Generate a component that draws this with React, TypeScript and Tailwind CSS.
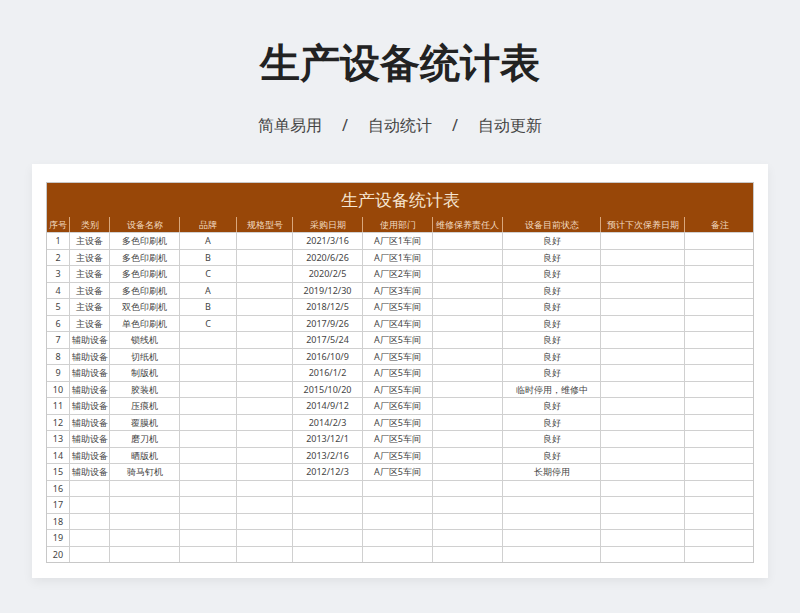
const cols = "grid-cols-[23px_40px_70px_57px_56px_70px_70px_70px_98px_84px_70px]";

const heads = ["序号", "类别", "设备名称", "品牌", "规格型号", "采购日期", "使用部门", "维修保养责任人", "设备目前状态", "预计下次保养日期", "备注"];

const rows: string[][] = [
  ["主设备", "多色印刷机", "A", "2021/3/16", "A厂区1车间", "良好"],
  ["主设备", "多色印刷机", "B", "2020/6/26", "A厂区1车间", "良好"],
  ["主设备", "多色印刷机", "C", "2020/2/5", "A厂区2车间", "良好"],
  ["主设备", "多色印刷机", "A", "2019/12/30", "A厂区3车间", "良好"],
  ["主设备", "双色印刷机", "B", "2018/12/5", "A厂区5车间", "良好"],
  ["主设备", "单色印刷机", "C", "2017/9/26", "A厂区4车间", "良好"],
  ["辅助设备", "锁线机", "", "2017/5/24", "A厂区5车间", "良好"],
  ["辅助设备", "切纸机", "", "2016/10/9", "A厂区5车间", "良好"],
  ["辅助设备", "制版机", "", "2016/1/2", "A厂区5车间", "良好"],
  ["辅助设备", "胶装机", "", "2015/10/20", "A厂区5车间", "临时停用，维修中"],
  ["辅助设备", "压痕机", "", "2014/9/12", "A厂区6车间", "良好"],
  ["辅助设备", "覆膜机", "", "2014/2/3", "A厂区5车间", "良好"],
  ["辅助设备", "磨刀机", "", "2013/12/1", "A厂区5车间", "良好"],
  ["辅助设备", "晒版机", "", "2013/2/16", "A厂区5车间", "良好"],
  ["辅助设备", "骑马钉机", "", "2012/12/3", "A厂区5车间", "长期停用"],
];

export default function App() {
  const all = Array.from({ length: 20 }, (_, i) => {
    const r = rows[i];
    return r
      ? [String(i + 1), r[0], r[1], r[2], "", r[3], r[4], "", r[5], "", ""]
      : [String(i + 1), "", "", "", "", "", "", "", "", "", ""];
  });

  return (
    <div className="w-[800px] h-[613px] bg-[#eef0f3] flex flex-col items-center font-['Noto_Sans_CJK_SC',sans-serif]">
      <h1 className="mt-[36px] text-[40px] leading-[52px] font-bold text-[#222]">生产设备统计表</h1>
      <div className="mt-[25px] flex items-center gap-[20px] text-[16px] text-[#444]">
        <span>简单易用</span>
        <span>/</span>
        <span>自动统计</span>
        <span>/</span>
        <span>自动更新</span>
      </div>
      <div className="mt-[27px] w-[736px] h-[414px] bg-white shadow-[0_4px_10px_rgba(0,0,0,0.06)] px-[14px] pt-[18px]">
        <div className="border border-[#c8c8c8] text-[9px] text-[#444]">
          <div className="h-[34px] bg-[#984708] text-[#f6e6d2] text-[17px] flex items-center justify-center">
            生产设备统计表
          </div>
          <div className={`grid ${cols} h-[15px] bg-[#984708] text-[#f3dcc2]`}>
            {heads.map((h, i) => (
              <div key={i} className="border-r border-[#d9a77c] last:border-r-0 flex items-center justify-center leading-none whitespace-nowrap">
                {h}
              </div>
            ))}
          </div>
          {all.map((r, ri) => (
            <div key={ri} className={`grid ${cols} h-[16.5px] border-t border-[#d0d0d0]`}>
              {r.map((c, ci) => (
                <div key={ci} className="border-r border-[#d0d0d0] last:border-r-0 flex items-center justify-center leading-none whitespace-nowrap">
                  {c}
                </div>
              ))}
            </div>
          ))}
        </div>
      </div>
    </div>
  );
}
